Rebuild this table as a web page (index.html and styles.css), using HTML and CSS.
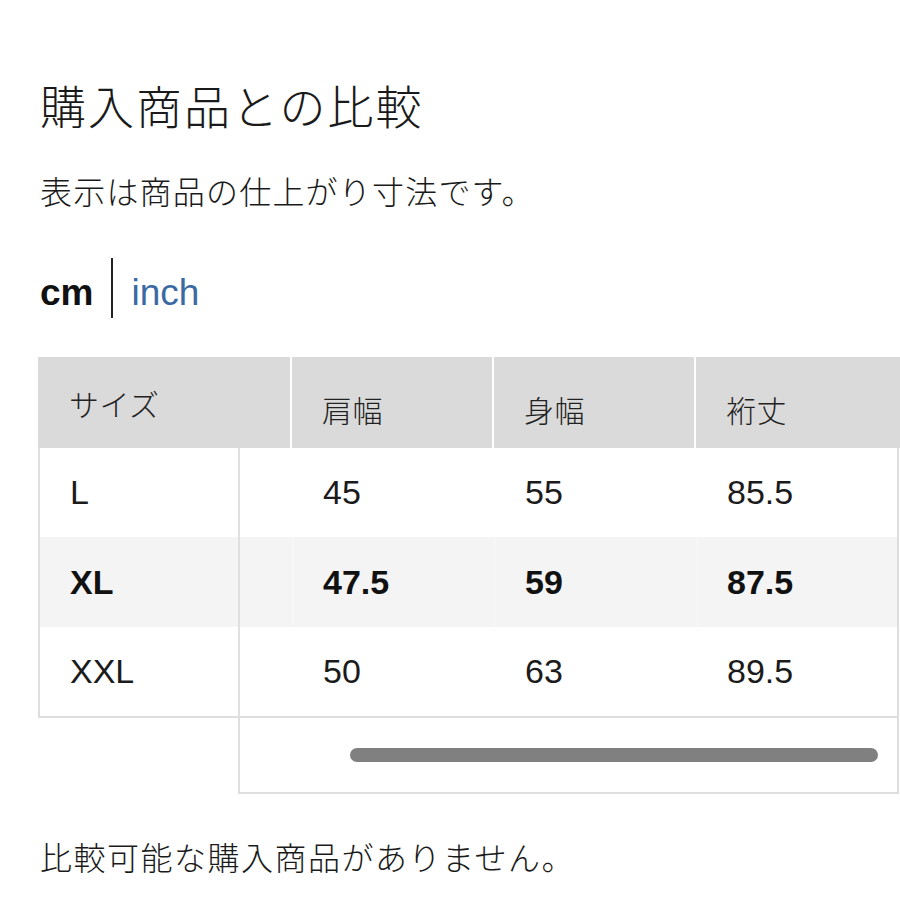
FILE: index.html
```html
<!DOCTYPE html>
<html lang="ja">
<head>
<meta charset="utf-8">
<title>購入商品との比較</title>
<link rel="stylesheet" href="styles.css">
</head>
<body>
<main class="page">
  <h1 class="title">購入商品との比較</h1>
  <p class="lead">表示は商品の仕上がり寸法です。</p>
  <div class="units">
    <span class="unit unit-active">cm</span>
    <span class="unit-divider"></span>
    <span class="unit unit-link">inch</span>
  </div>

  <section class="size-table">
    <div class="thead">
      <div class="th th-size">サイズ</div>
      <div class="th th-data">肩幅</div>
      <div class="th th-data">身幅</div>
      <div class="th th-data">裄丈</div>
    </div>
    <div class="tbody">
      <div class="tr">
        <div class="td td-size">L</div>
        <div class="td td-blank"></div>
        <div class="td td-data">45</div>
        <div class="td td-data">55</div>
        <div class="td td-data">85.5</div>
      </div>
      <div class="tr tr-striped tr-bold">
        <div class="td td-size">XL</div>
        <div class="td td-blank"></div>
        <div class="td td-data">47.5</div>
        <div class="td td-data">59</div>
        <div class="td td-data">87.5</div>
      </div>
      <div class="tr">
        <div class="td td-size">XXL</div>
        <div class="td td-blank"></div>
        <div class="td td-data">50</div>
        <div class="td td-data">63</div>
        <div class="td td-data">89.5</div>
      </div>
    </div>
    <div class="scroll-area">
      <div class="scroll-thumb"></div>
    </div>
  </section>

  <p class="note">比較可能な購入商品がありません。</p>
</main>
</body>
</html>
```

FILE: styles.css
```css
* {
  box-sizing: border-box;
}

html, body {
  margin: 0;
  padding: 0;
  background: #ffffff;
}

body {
  font-family: "Liberation Sans", "Noto Sans CJK JP", sans-serif;
  color: #1a1a1a;
  width: 900px;
  overflow: hidden;
}

.page {
  padding: 80px 0 0 0;
}

.title {
  margin: 0 0 0 40px;
  font-size: 46px;
  line-height: 56px;
  font-weight: 300;
  letter-spacing: 2px;
  height: 56px;
}

.lead {
  margin: 37px 0 0 40px;
  font-size: 32px;
  line-height: 40px;
  font-weight: 300;
  letter-spacing: 1.2px;
}

.units {
  display: flex;
  align-items: flex-start;
  margin: 45px 0 0 40px;
  height: 60px;
}

.unit {
  font-size: 37px;
  line-height: 37px;
  margin-top: 16px;
}

.unit-active {
  font-weight: 700;
  color: #111111;
}

.unit-divider {
  width: 2px;
  height: 60px;
  background: #222222;
  margin: 0 18px 0 18px;
}

.unit-link {
  color: #3b6aa3;
}

.size-table {
  margin: 39px 0 0 38px;
}

.thead {
  display: grid;
  grid-template-columns: 252px 200px 200px 1fr;
  column-gap: 2px;
  height: 91px;
}

.th {
  background: #dadada;
  display: flex;
  align-items: center;
  padding-left: 31px;
  font-size: 30px;
  font-weight: 300;
  letter-spacing: 0.5px;
  color: #222222;
}

.th-data {
  padding-top: 12px;
  padding-left: 30px;
}

.tbody {
  width: 861px;
  border-left: 2px solid #dedede;
  border-right: 2px solid #dedede;
  border-bottom: 2px solid #dedede;
}

.tr {
  display: grid;
  grid-template-columns: 200px 52px 202px 202px 1fr;
  height: 89px;
  background: #ffffff;
}

.tr-striped {
  background: #f4f4f4;
  height: 90px;
}

.td {
  display: flex;
  align-items: center;
  font-size: 34px;
  color: #1b1b1b;
}

.td-size {
  padding-left: 30px;
  border-right: 2px solid #e0e0e0;
}

.td-data {
  padding-left: 29px;
  border-left: 2px solid rgba(255, 255, 255, 0.3);
}

.tr-bold .td {
  font-weight: 700;
  color: #111111;
}

.scroll-area {
  margin-left: 200px;
  width: 661px;
  height: 76px;
  border-left: 2px solid #dedede;
  border-right: 2px solid #dedede;
  border-bottom: 2px solid #dedede;
  display: flex;
  align-items: center;
  padding: 0 19px 0 110px;
}

.scroll-thumb {
  flex: 1;
  height: 14px;
  border-radius: 7px;
  background: #808080;
}

.note {
  margin: 45px 0 0 40px;
  font-size: 32px;
  line-height: 40px;
  font-weight: 300;
  letter-spacing: 1.5px;
}
```
